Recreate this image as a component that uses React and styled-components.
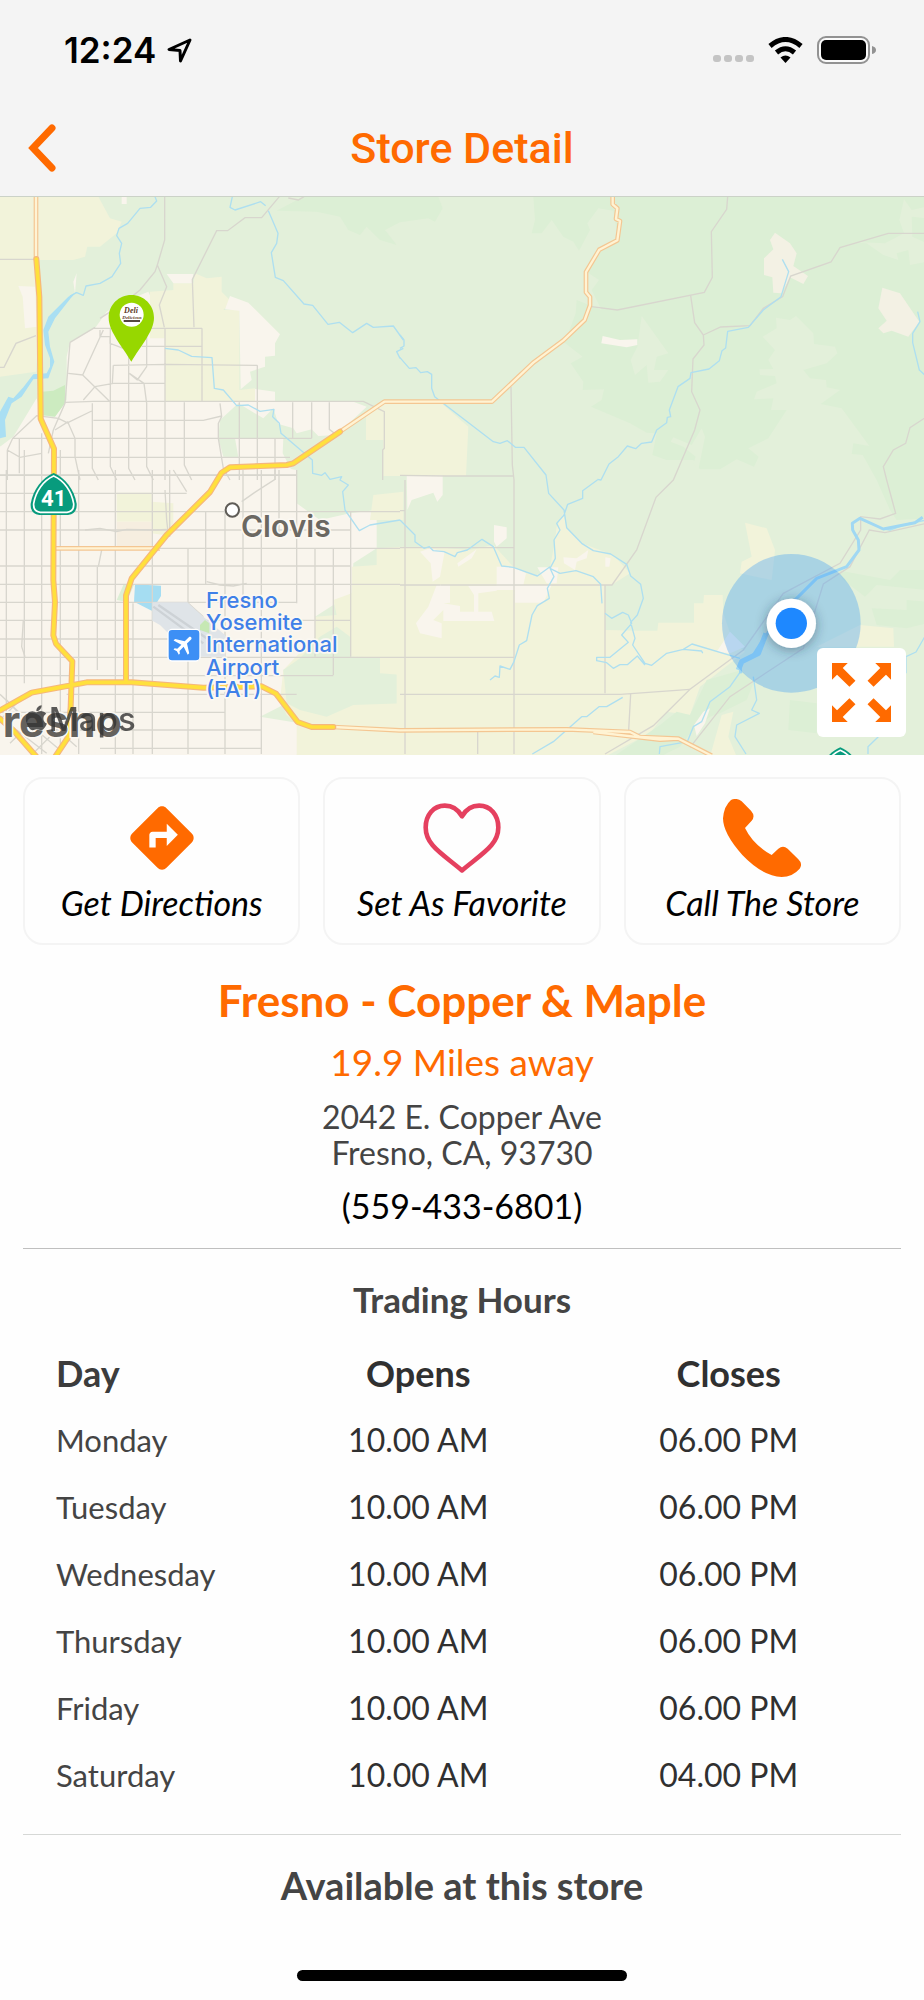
import React from "react";
import styled, { createGlobalStyle } from "styled-components";
import { FaApple } from "react-icons/fa";
import { MdDirections, MdFlight } from "react-icons/md";

const ORANGE = "#ff6a00";

const GlobalStyle = createGlobalStyle`
  *, *::before, *::after { box-sizing: border-box; }
  body {
    margin: 0;
    background: #fefefe;
    color: #444;
    font-family: Lato, "Open Sans", sans-serif;
  }
  h1, h2, p { margin: 0; }
`;

const Screen = styled.div`
  display: flex;
  flex-direction: column;
  min-height: 100vh;
`;

const Header = styled.header`
  background: #f4f4f4;
  border-bottom: 1px solid #cbd2c7;
`;

const StatusBar = styled.div`
  display: flex;
  align-items: center;
  justify-content: space-between;
  height: 100px;
  padding: 0 48px 0 64px;
  color: #000;
`;

const StatusGroup = styled.div`
  display: flex;
  align-items: center;
  gap: ${(p) => p.$gap}px;
`;

const Clock = styled.span`
  font: 600 35px/40px Inter, sans-serif;
`;

const NavBar = styled.nav`
  display: grid;
  grid-template-columns: 1fr auto 1fr;
  align-items: center;
  height: 96px;
  padding: 0 28px;
`;

const BackButton = styled.button`
  justify-self: start;
  display: flex;
  padding: 0;
  border: 0;
  background: none;
  cursor: pointer;
`;

const NavTitle = styled.h1`
  color: ${ORANGE};
  font: 500 43px/48px Roboto, sans-serif;
`;

const MapPanel = styled.section`
  position: relative;
  height: 558px;
  overflow: hidden;
`;

const MapDrawing = styled.svg`
  display: block;
  width: 100%;
  height: 100%;
`;

const ExpandButton = styled.button`
  position: absolute;
  right: 18px;
  bottom: 18px;
  display: flex;
  align-items: center;
  justify-content: center;
  width: 89px;
  height: 89px;
  padding: 0;
  border: 0;
  border-radius: 6px;
  background: #fff;
  cursor: pointer;
`;

const Content = styled.main`
  display: flex;
  flex-direction: column;
  padding: 22px 23px 0;
`;

const Actions = styled.div`
  display: grid;
  grid-template-columns: repeat(3, 1fr);
  gap: 23px;
`;

const ActionCard = styled.button`
  display: flex;
  flex-direction: column;
  align-items: center;
  height: 168px;
  padding: 19px 0 0;
  border: 2px solid #f4f4f4;
  border-radius: 20px;
  background: #fefefe;
  color: #000;
  font: italic 400 34px/40px Lato, sans-serif;
  cursor: pointer;
`;

const ActionIcon = styled.span`
  display: flex;
  align-items: center;
  justify-content: center;
  height: 80px;
  margin-bottom: 5px;
`;

const StoreInfo = styled.section`
  display: flex;
  flex-direction: column;
  align-items: center;
  gap: 15px;
  padding: 30px 0 22px;
  text-align: center;
`;

const StoreName = styled.h2`
  color: ${ORANGE};
  font-size: 44px;
  font-weight: 700;
  line-height: 50px;
`;

const Distance = styled.p`
  color: ${ORANGE};
  font-size: 37px;
  line-height: 44px;
`;

const Address = styled.p`
  font-size: 32px;
  line-height: 36px;
`;

const Phone = styled.a`
  color: #000;
  font-size: 34px;
  line-height: 40px;
  text-decoration: none;
`;

const Divider = styled.hr`
  width: 100%;
  height: 1px;
  margin: 0;
  border: 0;
  background: ${(p) => (p.$light ? "#d6d8d6" : "#bfbfbf")};
`;

const SectionTitle = styled.h2`
  margin-top: 28px;
  font-size: ${(p) => p.$size}px;
  font-weight: 700;
  line-height: 44px;
  text-align: center;
`;

const HoursTable = styled.table`
  width: 100%;
  margin: 18px 0 26px;
  padding: 0 17px 0 33px;
  table-layout: fixed;
  border-collapse: separate;
  border-spacing: 0;
  color: #303030;
`;

const ColumnHead = styled.th`
  width: ${(p) => p.$width};
  height: 67px;
  padding: 0;
  color: ${(p) => (p.$start ? "#3c3c3c" : "#303030")};
  font-size: 36px;
  font-weight: 700;
  text-align: ${(p) => (p.$start ? "left" : "center")};
`;

const DayCell = styled.th`
  height: 67px;
  padding: 0;
  color: #444;
  font-size: 31px;
  font-weight: 400;
  text-align: left;
`;

const TimeCell = styled.td`
  padding: 0;
  font-size: 32px;
  text-align: center;
`;

const HomeIndicator = styled.div`
  align-self: center;
  width: 330px;
  height: 11px;
  margin: 63px 0 18px;
  border-radius: 6px;
  background: #000;
`;

const hours = [
  ["Monday", "10.00 AM", "06.00 PM"],
  ["Tuesday", "10.00 AM", "06.00 PM"],
  ["Wednesday", "10.00 AM", "06.00 PM"],
  ["Thursday", "10.00 AM", "06.00 PM"],
  ["Friday", "10.00 AM", "06.00 PM"],
  ["Saturday", "10.00 AM", "04.00 PM"],
];

const TAN = "#f9f5ed";
const YELLOW = "#f2f3da";
const LIGHT = "#e3f0da";
const GREEN = "#dcefd5";

// City streets in the lower left of the map: [position, from, to].
const cityColumns = [
  [19, 0, 740], [73, -60, 640], [125, -110, 852], [181, -60, 852], [236, 0, 852],
  [292, 290, 600], [346, 0, 852], [399, 400, 852], [457, 0, 852], [509, 0, 200],
  [564, 235, 852], [617, 125, 343], [675, 120, 852], [729, 0, 400], [784, 0, 852],
  [837, 0, 200], [890, 0, 400], [945, 235, 560], [1000, 235, 615], [1052, 125, 560],
];
const cityRows = [
  [15, 0, 890], [70, 0, 560], [125, 0, 1200], [180, 0, 1052], [235, 480, 1200],
  [288, 0, 1052], [343, 0, 1200], [397, 0, 890], [451, 0, 1052], [507, 0, 560],
  [562, 0, 1200], [617, 0, 1000], [673, 200, 890], [727, 0, 675], [780, 240, 784],
  [835, 300, 784],
];
const northStreets =
  "M277 640V835L295 870M331 415V830L350 870M386 500V835L405 870M432 580L440 640V830L460 870M495 415V870M553 637V825L575 870M606 415V635M718 637V870M772 526V870M825 745V870M878 637V745M935 637V745M988 637V718L1010 735M280 415H606M425 469H606M340 526L500 523L772 526M340 526L337 580M285 590L340 580H495M195 637L280 634H1090L1153 665V775L1148 780V870M280 691H610L665 678M38 745H935M170 802H870M0 856H890M660 640L665 680L655 700V745L670 835L690 870M210 457L200 580L195 640L160 720L145 790M285 412L210 457M310 420L248 555L205 550M248 555L330 635M250 630L285 590M58 745V850M22 780L60 802L125 790M22 780V870M22 780L38 745L110 677L175 685L205 700L225 745V800L240 870M205 697L275 663M165 720L205 695M388 550L432 580M440 530V420M300 420V440H330V460L370 475M412 570L390 552M412 570L440 530";

function Shield({ x, y, label }) {
  return (
    <g transform={`translate(${x} ${y})`}>
      <path d="M0-66C34-52 62-16 69 26Q71 56 43 60H-43Q-71 56-69 26C-62-16-34-52 0-66Z" fill="#089b7d" />
      <path d="M0-57C30-44 54-12 60 26Q62 49 40 52H-40Q-62 49-60 26C-54-12-30-44 0-57Z" fill="none" stroke="#fff" strokeWidth="5" />
      {label && (
        <text y="33" textAnchor="middle" fill="#fff" fontFamily="Roboto, sans-serif" fontWeight="700" fontSize="66">
          {label}
        </text>
      )}
    </g>
  );
}

function StoreMap() {
  return (
    <MapDrawing viewBox="0 0 2772 1674" preserveAspectRatio="xMinYMid slice" role="img" aria-label="Map of Fresno and Clovis">
      <rect width="2772" height="1674" fill={LIGHT} />

      {/* land cover, north-east */}
      <g transform="translate(1200 -21)">
        <path fill={GREEN} d="M400 20L405 90L395 130H425L455 90L490 140L520 155L537 182L570 120L562 100L595 55L640 62L655 150L600 180L560 245L597 270L575 300L605 360L530 330L527 370L505 430L490 455L548 500L512 520L550 575L548 600L612 598L605 630L573 650L690 700L740 728L770 730L757 795L800 810H880L900 838H960L1010 808L1062 830L1076 800L1045 775L1105 745L1160 660H1113L1120 625L1062 628L1070 605L1130 580L1125 558L1080 555L1078 538L1120 537L1105 510L1125 480L1088 440L1130 415L1128 383L1170 390L1188 378L1240 430L1242 462L1305 470L1312 490L1280 520L1210 540L1230 565L1278 570L1280 592L1320 600L1262 642L1325 655L1408 768L1360 760L1355 792L1388 795L1430 870L1470 960L1490 990L1580 985V20Z" />
        <path fill={GREEN} d="M-370 62L-250 65L-180 80L-155 120L-120 135L-100 110L-60 150L-10 165L-45 120L0 97L85 85L105 95L128 55L115 20H-290Z" />
        <path fill={LIGHT} d="M725 378L805 490L770 500L762 540L805 540L780 575L745 578L740 525L705 555L692 510L712 470ZM1512 28L1535 60L1580 50V85L1535 80L1537 140L1580 160V215L1530 225L1525 180L1490 190L1495 210L1450 195L1400 160L1350 155L1455 160L1512 130L1498 90ZM905 715L915 740L895 840L880 820L887 800L850 770L812 755L820 742L875 765Z" />
        <path fill="#f3f1e4" d="M1125 128L1170 160L1190 190L1180 228L1224 258L1210 282L1170 262L1145 310L1120 308L1117 262L1092 255V205L1120 178L1110 150ZM1447 293L1500 310L1558 395L1525 440L1475 422L1450 430L1435 415L1460 392L1435 355Z" />
        <path fill={TAN} d="M608 438L660 450L712 448V465L680 472L604 460Z" />
        <path fill={YELLOW} d="M-50 640H125L205 710L198 858H-50V750H-102V680Z" />
      </g>

      {/* land cover, north-west */}
      <g transform="translate(0 -21)">
        <path fill={YELLOW} d="M0 20H295L330 85L365 95L350 130L300 170H262L255 200L220 210H115V440L108 545L0 560Z" />
        <path fill={TAN} d="M55 288L105 290L110 410L75 415L68 320ZM365 20H380V42H365ZM230 250L225 310L220 275Z" />
        <path fill={TAN} d="M0 770L40 740L110 625L125 680L165 680L200 630L200 500L210 455L285 415L320 365L360 340L445 305L495 415V635H720L660 690L655 745L670 800L715 802L705 745H850L848 790L890 870H0ZM765 597L825 605V635H1060L1100 650L1010 735L955 738L935 718L890 730L880 715L835 702L820 655L790 685L715 640L740 610Z" />
        <path fill={YELLOW} d="M450 305L520 300V280H580L585 250L620 265L665 260V305L695 335L670 360H718V600L765 595V635H495V445H450Z" />
        <path fill={TAN} d="M690 318L745 338L840 433L825 460V497L795 500V530L750 545L755 570L722 598L718 362L675 358ZM500 252H580L578 280H520Z" />
        <path fill="#ccebc0" d="M125 605L160 602L195 585V640L165 680L125 675Z" />
      </g>

      {/* land cover, south-west */}
      <g transform="translate(0 819)">
        <path fill={TAN} d="M0-70L640-40L890 0V100L960 150L1050 130L1130 120V235L1060 280L1055 370L945 440V500L910 580L850 600L860 700L780 740L900 760L890 860H0Z" />
        <path fill={YELLOW} d="M350 68H455V95L520 100V160L490 195L455 190V155H350ZM1130 235L1210 230V860H890V760L860 735L840 690L850 600L945 500V440L1010 435L1000 390L1055 370V290L1130 285ZM1120 75L1210 65V150H1110Z" />
        <path fill={LIGHT} d="M850 600L900 565L960 500L1010 470L1050 500L1052 560L1140 562V610L1210 615V700L1060 705L980 740L900 720L860 700Z" />
        <path fill="#f6eee0" d="M350 155H455V230H350Z" />
        <path fill="#dcefd5" d="M350 390L370 345H402L380 395Z" />
        <path fill="#a5ddf2" d="M405 343L483 347V378L455 422L402 395Z" />
      </g>

      {/* land cover, south-east */}
      <g transform="translate(1200 819)">
        <path fill={YELLOW} d="M-10 235L90 230L210 240L280 225L340 290L410 315L450 290L462 230L470 170L490 130L500 175L545 220L640 255L690 310L635 345H615V480L720 482H772L775 458H882V400H910L912 375H968L970 430L1000 520L1035 545L900 650L870 735L800 725L750 790L615 860H-10ZM1035 158L1100 175L1125 240L1115 330L1020 310L1025 275L1055 260ZM1380 465L1480 475L1482 530H1250ZM965 735L1000 725L985 800L1010 860H930Z" />
        <path fill={GREEN} d="M920 630L1025 600L1060 640L1040 690L960 730L930 740L870 790L840 830L780 860H640L780 765L830 725L870 735ZM1310 300L1330 330L1395 380L1430 345L1580 360V300L1500 300L1470 330ZM1415 415L1520 420V390L1580 395V460L1520 475L1430 465ZM1170 690L1250 700V790L1165 780Z" />
        <path fill={TAN} d="M20 15H128V75L112 95L100 68L35 90L22 120ZM282 165L320 172V205L290 230L282 215ZM60 245L90 235L134 245L120 320L98 335L92 280ZM110 345H150V398L130 400L180 408V425H275L283 453H130V420L100 450L125 460V505L60 490L48 460L85 410ZM205 348H290V362L235 370V425H222V375ZM290 290L340 290L378 310L370 345H455L430 398H345V360H290ZM412 292H475L470 340H440ZM490 262L530 265L565 240L560 265L530 275L525 300L492 280ZM616 262L632 265L628 290L616 290ZM172 280L230 238L215 265L175 290ZM950 545L990 485L1035 530L990 550ZM910 725L930 715L915 760L890 798L882 765Z" />
      </g>

      {/* minor roads */}
      <g fill="none" stroke="#d8d6ce" strokeWidth="4">
        <path transform="translate(0 -21)" d={northStreets} />
        <path transform="translate(0 -21)" d="M0 208H105M0 532H12L48 460L108 437M494 20V150L472 225L500 290L478 345L493 412M472 225L465 245L420 300L370 340L300 385M582 412L577 268L650 122H683L735 83H785L838 20M865 24L895 30L912 20" />
        <g transform="translate(0 819)">
          {cityColumns.map(([x, from, to]) => (
            <path key={x} d={`M${x} ${from}V${to}`} />
          ))}
          {cityRows.map(([y, from, to]) => (
            <path key={y} d={`M${from} ${y}H${to}`} />
          ))}
          <path d="M255 180L300 175L350 185L380 178L470 180L500 178M495 60L500 150L505 195M520 0L560 65M725 95L760 70L825 28V0M565 400L610 440M620 335L660 345L700 348L740 340M70 450L65 530L75 560M305 240L295 290M0 673L60 730M50 780L140 850M100 850L200 750M120 790L180 840M30 820L80 770M150 760L230 830M130 820L230 720M20 690L120 800M60 690L0 750" />
        </g>
        <g transform="translate(1200 -21)">
          <path d="M983 20L980 58L934 125L937 262L913 307L652 360L575 350M872 317L884 398L910 435L912 465L879 507L875 605L900 660L884 720L820 870L768 922L710 1080L636 1185H122M910 435L962 411L1050 407L1090 355L1148 320L1172 258L1293 216L1320 173L1465 130H1580M1580 680L1530 713L1517 760L1480 780L1450 830L1460 870L1487 970L1440 987L1382 980V1020L1320 1120L1150 1210L1030 1380L870 1498L760 1607L615 1692M1580 1000L1455 1028L1408 1020L1350 1130L1270 1182L1210 1375L990 1520L870 1672M333 590L337 825L342 870V1692M0 856L140 858H342" />
          <path d="M0 1073H342M0 1185H122M15 870V1692M0 1402H342M0 1513H662L870 1498M615 1185V1510M692 1512L686 1620M233 1625V1692M0 962H15" />
        </g>
      </g>

      {/* rivers and creeks */}
      <g fill="none" stroke="#aedff0" strokeWidth="4" strokeLinejoin="round">
        <path transform="translate(0 -21)" d="M465 20L470 33L452 52L420 55L383 100L357 115L350 137L365 160L358 190L362 220L336 260L300 280L258 288L250 316L230 308L210 318M697 20L690 52L705 60L782 35L797 47M805 62L834 130L830 160L814 188L826 262L850 272L912 342L938 346L984 403L1018 397L1058 428L1100 400L1120 412L1180 408L1210 450M1210 475L1190 485L1200 505M495 475L535 480L575 499L636 503L643 595L670 600L710 647L745 645L780 664L822 658L818 680L838 700L843 730L937 810L938 850L965 856L975 848L990 868L1025 860L1020 870L1045 885L1028 905L1035 960L1078 1022L1110 1005L1200 990" />
        <path transform="translate(1200 -21)" d="M0 435L12 450V468L0 475M0 503L28 535L48 533L62 548L82 545L95 553V595L104 620L280 755L300 760L322 752L346 772H372L438 855L446 910L492 960L500 1013L545 1060L580 1082L632 1092L680 1123L692 1158L722 1183L730 1225L712 1275L692 1297L705 1345L698 1365L735 1420L755 1426L800 1390L850 1378L905 1383L908 1390M592 868L603 870L627 822L655 800L682 768L707 776L725 760L755 756L770 720L800 698L802 682L812 680L808 660L834 590L870 565L873 548L927 537L958 512L966 482L977 474L983 424L1045 412L1090 360L1143 320L1166 245L1147 208M1553 365L1560 395L1538 430V458L1558 540L1580 560M592 870L548 902V925L503 943L492 975L470 1000L480 1020L462 1050L466 1105L450 1135L462 1160L442 1195L448 1225L412 1247L396 1275L380 1352L358 1365L342 1415L330 1438L300 1428L298 1462L285 1458L270 1470M450 1135L480 1150L528 1142L580 1160L602 1183L606 1240M615 1270L635 1285L668 1267L685 1275L695 1300L665 1335L685 1357L630 1402H590V1412L620 1418L640 1435L660 1424H682L712 1398L735 1425M850 1378L876 1362L1020 1405M0 990L45 1035V1055L72 1075L88 1070L100 1082L132 1085L165 1100L172 1088L202 1080L246 1048L280 1070L305 1128L340 1132L412 1158L450 1130M397 1692L460 1655L545 1580H560L597 1550H620L668 1522M1580 990L1520 1002L1470 1020L1440 1015M1025 1440L990 1490L930 1535L905 1595L880 1610L862 1655L780 1670L778 1692M1060 1460L1070 1530L1055 1560L1078 1570L1010 1605L1005 1640L1038 1692M1404 1692V1670L1435 1640M1580 1330L1548 1386L1518 1400V1450" />
      </g>
      <g transform="translate(0 -21)" fill="#a9dff3">
        <path d="M230 305L205 320L145 380L130 420L135 465L150 505V530L140 550L100 553L70 592L40 625L25 620L0 665V745L18 740L15 690L35 640L65 620L100 568L145 565L163 515L150 470L145 425L165 385L212 325Z" />
      </g>
      <g transform="translate(1200 819)" fill="none" stroke="#a0d8f3" strokeLinejoin="round">
        <path d="M1568 142L1545 158L1450 177L1380 145L1357 160L1358 180L1375 210L1377 240L1340 290L1250 325L1180 395L1095 500L1060 555L1020 580L1022 610" strokeWidth="9" />
        <path d="M1098 490L1075 550L1025 575L1015 600" strokeWidth="16" />
      </g>

      {/* airport grounds */}
      <g transform="translate(0 819)">
        <path fill="#dfe4e8" d="M457 397H562L610 440L675 495V560H600L505 490L480 465L457 452Z" />
        <path fill="#c6e8b4" d="M600 465L615 450L628 460V490L600 480Z" />
        <path d="M460 410L610 520M475 405L620 505" stroke="#cdd2d6" strokeWidth="7" />
      </g>

      {/* secondary highways */}
      {[["#f4c692", 14], ["#fff3d3", 7]].map(([stroke, strokeWidth]) => (
        <g key={stroke} fill="none" stroke={stroke} strokeWidth={strokeWidth} strokeLinejoin="round">
          <path d="M108 0V190M1020 704L1153 614H1476L1600 497L1690 430L1754 369L1770 325V300L1758 286V225L1798 158L1852 130L1860 72L1848 66L1852 34L1838 22V0M160 1054H480M1000 1590L1200 1600L1700 1597L1890 1605L1920 1620L2035 1625L2135 1676M1780 1605L1980 1628L2035 1625" />
        </g>
      ))}

      {/* freeways */}
      {[["#f6b77c", 18], ["#ffe03c", 11]].map(([stroke, strokeWidth]) => (
        <g key={stroke} fill="none" stroke={stroke} strokeWidth={strokeWidth} strokeLinejoin="round" strokeLinecap="round">
          <path d="M109 186L118 300L122 665L162 755L160 1150L165 1215L160 1315L168 1340L217 1393L212 1530L205 1620L165 1680M1020 704L880 799L860 804L690 811L665 827L630 885L500 1014L395 1144L378 1195V1455M0 1540L95 1487L260 1456H395L610 1472L785 1468L828 1490L893 1575L935 1590H1000M0 1565L40 1600L110 1680" />
        </g>
      ))}

      {/* places */}
      <g transform="translate(0 819)" fontFamily="Inter, sans-serif" paintOrder="stroke" stroke="#fbf8f2" strokeWidth="10" strokeLinejoin="round">
        <text x="8" y="800" fontSize="129" fontWeight="700" fill="#65625d">resno</text>
        <text x="723" y="200" fontSize="90" fontWeight="600" fill="#6b6862">Clovis</text>
        <g fontSize="66" fontWeight="500" fill="#3f80e8">
          <text x="618" y="414">Fresno</text>
          <text x="618" y="480">Yosemite</text>
          <text x="618" y="547">International</text>
          <text x="618" y="614">Airport</text>
          <text x="618" y="682">(FAT)</text>
        </g>
      </g>
      <g transform="translate(0 819)">
        <circle cx="697" cy="120" r="20" fill="#fff" stroke="#5f5c57" strokeWidth="6" />
        <rect x="504" y="478" width="96" height="95" rx="12" fill="#3d8ff5" stroke="#fff" strokeWidth="4" />
        <g transform="rotate(45 552 525)">
          <MdFlight x="514" y="487" size="76" color="#fff" />
        </g>
        <g opacity="0.8" color="#333" fill="#333">
          <FaApple x="66" y="700" size="86" />
          <text x="146" y="782" fontFamily="Inter, sans-serif" fontSize="99" fontWeight="500">Maps</text>
        </g>
      </g>
      <Shield x={161} y={894} label="41" />
      <Shield x={2521} y={1717} />

      {/* store pin */}
      <g transform="translate(0 -21)">
        <path fill="#97d700" d="M394 315C432 315 462 345 462 383C462 425 420 470 394 515C368 470 326 425 326 383C326 345 356 315 394 315Z" />
        <circle cx="395" cy="374" r="36" fill="#fff" />
        <g fill="#5b3925" textAnchor="middle" fontFamily="Liberation Serif, serif" fontWeight="700" fontStyle="italic">
          <text x="393" y="370" fontSize="24">Deli</text>
          <text x="396" y="386" fontSize="15">Delicious</text>
        </g>
        <path d="M371 393H420" stroke="#33231a" strokeWidth="5" />
      </g>

      {/* current position */}
      <defs>
        <filter id="dot-shadow" x="-50%" y="-50%" width="200%" height="200%">
          <feDropShadow dx="0" dy="6" stdDeviation="18" floodColor="#234" floodOpacity="0.45" />
        </filter>
      </defs>
      <circle cx="2374" cy="1279" r="208" fill="#3b9cf5" fillOpacity="0.34" />
      <circle cx="2374" cy="1279" r="74" fill="#fff" filter="url(#dot-shadow)" />
      <circle cx="2374" cy="1279" r="47" fill="#1e88ff" />
    </MapDrawing>
  );
}

function ExpandIcon() {
  const arrow = "M0 0H47L32 15L70 53L52 71L15 35L0 50Z";
  return (
    <svg width="59" height="59" viewBox="0 0 176 176" fill={ORANGE} aria-hidden="true">
      <path d={arrow} />
      <path d={arrow} transform="translate(176 0) scale(-1 1)" />
      <path d={arrow} transform="translate(0 176) scale(1 -1)" />
      <path d={arrow} transform="translate(176 176) scale(-1 -1)" />
    </svg>
  );
}

function LocationIcon() {
  return (
    <svg width="25" height="25" viewBox="0 0 25 25" fill="none" stroke="#000" strokeWidth="3" strokeLinejoin="round" aria-hidden="true">
      <path d="M23 2L2 11.500L13 12.500L13.500 23Z" />
    </svg>
  );
}

function SignalDots() {
  return (
    <svg width="41" height="26" viewBox="0 0 41 26" fill="#c4c4c4" aria-hidden="true">
      {[0, 11, 22, 33].map((x) => (
        <rect key={x} x={x} y="18" width="8" height="7" rx="3" />
      ))}
    </svg>
  );
}

function WifiIcon() {
  return (
    <svg width="35" height="26" viewBox="0 0 35 26" fill="none" stroke="#000" strokeWidth="5" aria-hidden="true">
      <path d="M2 9Q17.500-4 33 9" />
      <path d="M8.500 15.500Q17.500 8 26.500 15.500" />
      <path d="M17.500 26L12.500 20.500Q17.500 16.500 22.500 20.500Z" fill="#000" stroke="none" />
    </svg>
  );
}

function BatteryIcon() {
  return (
    <svg width="59" height="28" viewBox="0 0 59 28" aria-hidden="true">
      <rect x="1" y="1" width="51" height="26" rx="8" fill="#fafafa" stroke="#929292" strokeWidth="2" />
      <rect x="4" y="4" width="45" height="20" rx="5" fill="#000" />
      <path d="M55 10Q59 11 59 14Q59 17 55 18Z" fill="#929292" />
    </svg>
  );
}

function HeartIcon() {
  return (
    <svg width="78" height="70" viewBox="40 38 234 212" fill="none" stroke="#e5405f" strokeWidth="14" strokeLinejoin="round" aria-hidden="true">
      <path d="M157 78Q138 46 105 46C70 46 47 75 47 112C47 165 95 190 157 242C219 190 267 165 267 112C267 75 244 46 209 46Q176 46 157 78Z" />
    </svg>
  );
}

function PhoneIcon() {
  return (
    <svg width="78" height="78" viewBox="942 27 234 234" fill={ORANGE} aria-hidden="true">
      <path d="M966 30Q984 22 998 34L1026 62Q1040 78 1028 92L1008 114Q1032 164 1088 195L1108 176Q1122 165 1136 176L1168 208Q1182 222 1172 236Q1150 261 1118 261Q1060 258 1000 195Q942 130 942 85Q945 48 966 30Z" />
    </svg>
  );
}

export default function App() {
  return (
    <Screen>
      <GlobalStyle />
      <Header>
        <StatusBar>
          <StatusGroup $gap={11}>
            <Clock>12:24</Clock>
            <LocationIcon />
          </StatusGroup>
          <StatusGroup $gap={14}>
            <SignalDots />
            <WifiIcon />
            <BatteryIcon />
          </StatusGroup>
        </StatusBar>
        <NavBar>
          <BackButton aria-label="Back">
            <svg width="28" height="48" viewBox="0 0 28 48" fill="none" stroke={ORANGE} strokeWidth="7" strokeLinecap="round" aria-hidden="true">
              <path d="M24 4L5 24L24 44" />
            </svg>
          </BackButton>
          <NavTitle>Store Detail</NavTitle>
        </NavBar>
      </Header>

      <MapPanel>
        <StoreMap />
        <ExpandButton aria-label="Expand map">
          <ExpandIcon />
        </ExpandButton>
      </MapPanel>

      <Content>
        <Actions>
          <ActionCard>
            <ActionIcon><MdDirections size={76} color={ORANGE} /></ActionIcon>
            Get Directions
          </ActionCard>
          <ActionCard>
            <ActionIcon><HeartIcon /></ActionIcon>
            Set As Favorite
          </ActionCard>
          <ActionCard>
            <ActionIcon><PhoneIcon /></ActionIcon>
            Call The Store
          </ActionCard>
        </Actions>

        <StoreInfo>
          <StoreName>Fresno - Copper &amp; Maple</StoreName>
          <Distance>19.9 Miles away</Distance>
          <Address>
            2042 E. Copper Ave
            <br />
            Fresno, CA, 93730
          </Address>
          <Phone href="tel:5594336801">(559-433-6801)</Phone>
        </StoreInfo>
        <Divider />

        <SectionTitle $size={35}>Trading Hours</SectionTitle>
        <HoursTable>
          <thead>
            <tr>
              <ColumnHead scope="col" $start $width="25%">Day</ColumnHead>
              <ColumnHead scope="col">Opens</ColumnHead>
              <ColumnHead scope="col">Closes</ColumnHead>
            </tr>
          </thead>
          <tbody>
            {hours.map(([day, opens, closes]) => (
              <tr key={day}>
                <DayCell scope="row">{day}</DayCell>
                <TimeCell>{opens}</TimeCell>
                <TimeCell>{closes}</TimeCell>
              </tr>
            ))}
          </tbody>
        </HoursTable>
        <Divider $light />

        <SectionTitle $size={38}>Available at this store</SectionTitle>
        <HomeIndicator />
      </Content>
    </Screen>
  );
}
